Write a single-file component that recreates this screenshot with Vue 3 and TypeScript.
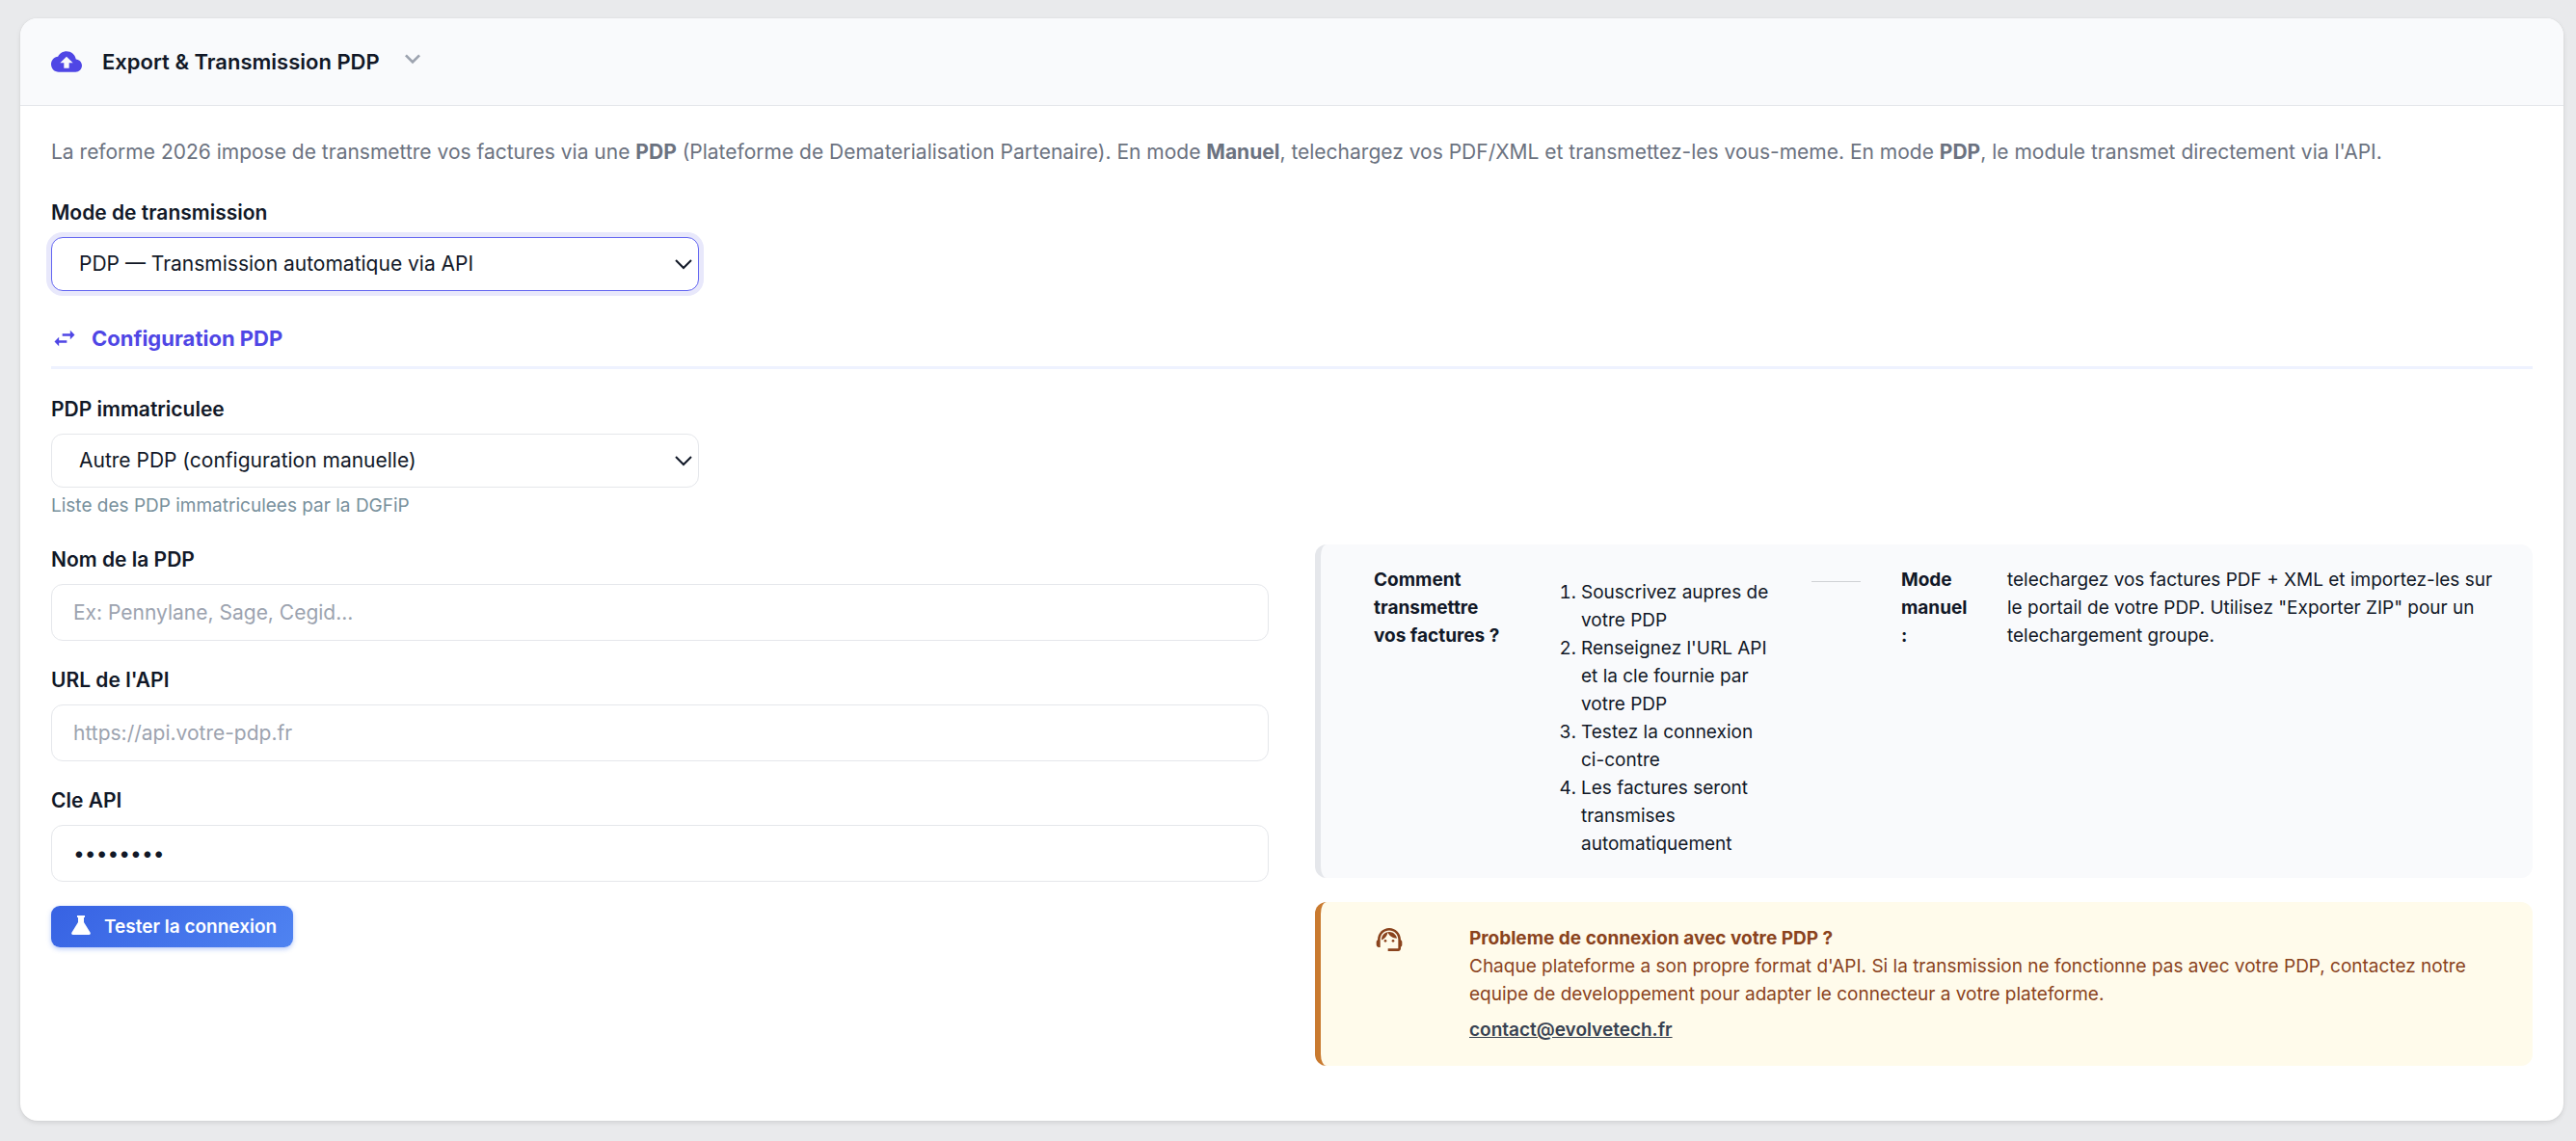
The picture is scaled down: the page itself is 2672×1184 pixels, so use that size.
<script setup lang="ts">
import { ref } from 'vue'

const mode = ref('pdp')
const provider = ref('autre')
const nom = ref('')
const url = ref('')
const cle = ref('password')
</script>

<template>
  <main class="page">
    <section class="card">
      <header class="card-head">
        <svg class="head-icon" viewBox="0 0 24 24" aria-hidden="true">
          <path fill="currentColor" d="M19.35 10.04C18.67 6.59 15.64 4 12 4 9.11 4 6.6 5.64 5.35 8.04 2.34 8.36 0 10.91 0 14c0 3.31 2.69 6 6 6h13c2.76 0 5-2.24 5-5 0-2.64-2.05-4.78-4.65-4.96zM14 13v4h-4v-4H7l5-5 5 5h-3z" />
        </svg>
        <h1>Export &amp; Transmission PDP</h1>
        <svg class="chevron" viewBox="0 0 24 24" aria-hidden="true">
          <path fill="currentColor" d="M16.59 8.59L12 13.17 7.41 8.59 6 10l6 6 6-6z" />
        </svg>
      </header>

      <div class="card-body">
        <p class="intro">
          La reforme 2026 impose de transmettre vos factures via une <strong>PDP</strong> (Plateforme de Dematerialisation Partenaire). En mode <strong>Manuel</strong>, telechargez vos PDF/XML et transmettez-les vous-meme. En mode <strong>PDP</strong>, le module transmet directement via l'API.
        </p>

        <div class="field">
          <label for="mode">Mode de transmission</label>
          <div class="select-wrap">
            <select id="mode" v-model="mode" class="active">
              <option value="manuel">Manuel</option>
              <option value="pdp">PDP — Transmission automatique via API</option>
            </select>
            <svg class="arrow" viewBox="0 0 20 12" aria-hidden="true">
              <path d="M2 2l8 8 8-8" fill="none" stroke="currentColor" stroke-width="2" />
            </svg>
          </div>
        </div>

        <h2>
          <svg viewBox="0 0 24 24" aria-hidden="true">
            <path fill="currentColor" d="M21 9l-4-4v3h-7v2h7v3M7 11l-4 4 4 4v-3h7v-2H7v-3z" />
          </svg>
          Configuration PDP
        </h2>

        <div class="field">
          <label for="provider">PDP immatriculee</label>
          <div class="select-wrap">
            <select id="provider" v-model="provider">
              <option value="autre">Autre PDP (configuration manuelle)</option>
            </select>
            <svg class="arrow" viewBox="0 0 20 12" aria-hidden="true">
              <path d="M2 2l8 8 8-8" fill="none" stroke="currentColor" stroke-width="2" />
            </svg>
          </div>
          <p class="hint">Liste des PDP immatriculees par la DGFiP</p>
        </div>

        <div class="columns">
          <form class="form" @submit.prevent>
            <div class="field">
              <label for="nom">Nom de la PDP</label>
              <input id="nom" v-model="nom" type="text" placeholder="Ex: Pennylane, Sage, Cegid..." />
            </div>
            <div class="field">
              <label for="url">URL de l'API</label>
              <input id="url" v-model="url" type="url" placeholder="https://api.votre-pdp.fr" />
            </div>
            <div class="field">
              <label for="cle">Cle API</label>
              <input id="cle" v-model="cle" type="password" autocomplete="off" />
            </div>
            <button type="button">
              <svg viewBox="0 0 20 20" aria-hidden="true">
                <path fill="currentColor" d="M6 0h8v2h-1v5l6.500 10.500q1 2-1 2.500h-17q-2-.5-1-2.500L7 7V2H6z" />
              </svg>
              Tester la connexion
            </button>
          </form>

          <div class="aside">
            <div class="note steps">
              <strong>Comment transmettre vos factures ?</strong>
              <ol>
                <li>Souscrivez aupres de votre PDP</li>
                <li>Renseignez l'URL API et la cle fournie par votre PDP</li>
                <li>Testez la connexion ci-contre</li>
                <li>Les factures seront transmises automatiquement</li>
              </ol>
              <hr />
              <strong>Mode manuel :</strong>
              <span>telechargez vos factures PDF + XML et importez-les sur le portail de votre PDP. Utilisez "Exporter ZIP" pour un telechargement groupe.</span>
            </div>

            <div class="note warning">
              <svg viewBox="0 0 24 24" aria-hidden="true">
                <path fill="currentColor" d="M21 12.22C21 6.73 16.74 3 12 3c-4.690 0-9 3.650-9 9.280-.6.340-1 .980-1 1.720v2c0 1.100.9 2 2 2h1v-6.100c0-3.870 3.130-7 7-7s7 3.130 7 7V19h-8v2h8c1.100 0 2-.9 2-2v-1.220c.590-.310 1-.920 1-1.640v-2.300c0-.7-.410-1.310-1-1.620z" />
                <circle fill="currentColor" cx="9" cy="13" r="1" />
                <circle fill="currentColor" cx="15" cy="13" r="1" />
                <path fill="currentColor" d="M18 11.030C17.520 8.180 15.040 6 12.050 6c-3.030 0-6.290 2.510-6.030 6.450 2.470-1.010 4.330-3.210 4.860-5.890 1.310 2.630 4 4.440 7.120 4.470z" />
              </svg>
              <div>
                <strong>Probleme de connexion avec votre PDP ?</strong>
                <p>Chaque plateforme a son propre format d'API. Si la transmission ne fonctionne pas avec votre PDP, contactez notre equipe de developpement pour adapter le connecteur a votre plateforme.</p>
                <a href="mailto:contact@evolvetech.fr">contact@evolvetech.fr</a>
              </div>
            </div>
          </div>
        </div>
      </div>
    </section>
  </main>
</template>

<style>
body {
  background: #e9eaec;
}
</style>

<style scoped>
.page {
  padding: 19px 13px 21px 21px;
  font-family: Inter, "Liberation Sans", sans-serif;
  font-size: 21px;
  line-height: 32px;
  color: #111827;
}

.page * {
  box-sizing: border-box;
}

h1,
h2,
p,
ol,
hr {
  margin: 0;
}

.card {
  background: #fff;
  border-radius: 18px;
  box-shadow: 0 2px 5px rgba(0, 0, 0, 0.1), 0 0 2px rgba(0, 0, 0, 0.06);
  overflow: hidden;
}

.card-head {
  display: flex;
  align-items: center;
  height: 91px;
  padding: 0 32px;
  background: #f9fafc;
  border-bottom: 1px solid #e5e7eb;
}

.head-icon {
  width: 32px;
  height: 32px;
  color: #4f46e5;
}

h1 {
  margin: 0 18px 0 21px;
  font-size: 22px;
  font-weight: 600;
}

.chevron {
  width: 32px;
  height: 32px;
  margin-bottom: 6px;
  color: #9ca3af;
}

.card-body {
  padding: 32px 32px 57px;
}

.intro {
  margin-bottom: 31px;
  color: #6b7280;
}

.field label {
  display: block;
  margin-bottom: 9px;
  font-weight: 600;
}

.select-wrap {
  position: relative;
  width: 672px;
  max-width: 100%;
}

select,
input {
  display: block;
  width: 100%;
  border: 1px solid #e5e7eb;
  border-radius: 12px;
  background: #fff;
  font: inherit;
  color: #111827;
  outline: none;
}

select {
  height: 56px;
  padding: 0 48px 0 28px;
  appearance: none;
}

select.active {
  border-color: #6366f1;
  box-shadow: 0 0 0 5px #e8e8fb;
}

.arrow {
  position: absolute;
  top: 22px;
  right: 6px;
  width: 20px;
  height: 12px;
  pointer-events: none;
}

input {
  height: 59px;
  padding: 0 22px;
}

input::placeholder {
  color: #9ca3af;
  opacity: 1;
}

h2 {
  display: flex;
  align-items: center;
  gap: 14px;
  margin: 33px 0 26px;
  padding-bottom: 13px;
  border-bottom: 3px solid #eef2ff;
  font-size: 22px;
  font-weight: 700;
  color: #4f46e5;
}

h2 svg {
  width: 28px;
  height: 28px;
}

.hint {
  margin-top: 3px;
  font-size: 19px;
  color: #78909c;
}

.columns {
  display: grid;
  grid-template-columns: 1fr 1fr;
  gap: 48px;
  margin-top: 24px;
}

.form .field {
  margin-bottom: 25px;
}

button {
  display: flex;
  align-items: center;
  gap: 14px;
  height: 43px;
  padding: 0 17px 0 21px;
  border: 0;
  border-radius: 9px;
  background: linear-gradient(135deg, #3762e3, #4f83f1);
  box-shadow: 0 2px 5px rgba(59, 110, 235, 0.35);
  font: inherit;
  font-size: 19px;
  font-weight: 600;
  color: #fff;
}

button svg {
  width: 20px;
  height: 20px;
  margin-bottom: 4px;
}

.aside {
  display: grid;
  gap: 25px;
  align-content: start;
}

.note {
  display: grid;
  column-gap: 42px;
  padding: 22px 32px 21px 55px;
  border-left: 6px solid #e5e7eb;
  border-radius: 12px;
  background: #f9fafc;
  font-size: 19px;
  line-height: 29px;
}

.steps {
  grid-template-columns: 134px 236px 51px 68px 1fr;
}

ol {
  padding: 13px 0 0 39px;
}

hr {
  align-self: start;
  margin-top: 16px;
  border: 0;
  border-top: 1px solid #cfd1d5;
}

.warning {
  grid-template-columns: 57px 1fr;
  padding-top: 23px;
  padding-bottom: 23px;
  border-left-color: #c97a2f;
  background: #fffbeb;
  color: #8a431d;
}

.warning svg {
  width: 32px;
  height: 32px;
}

.warning a {
  display: inline-block;
  margin-top: 8px;
  font-weight: 600;
  color: #374151;
}
</style>
